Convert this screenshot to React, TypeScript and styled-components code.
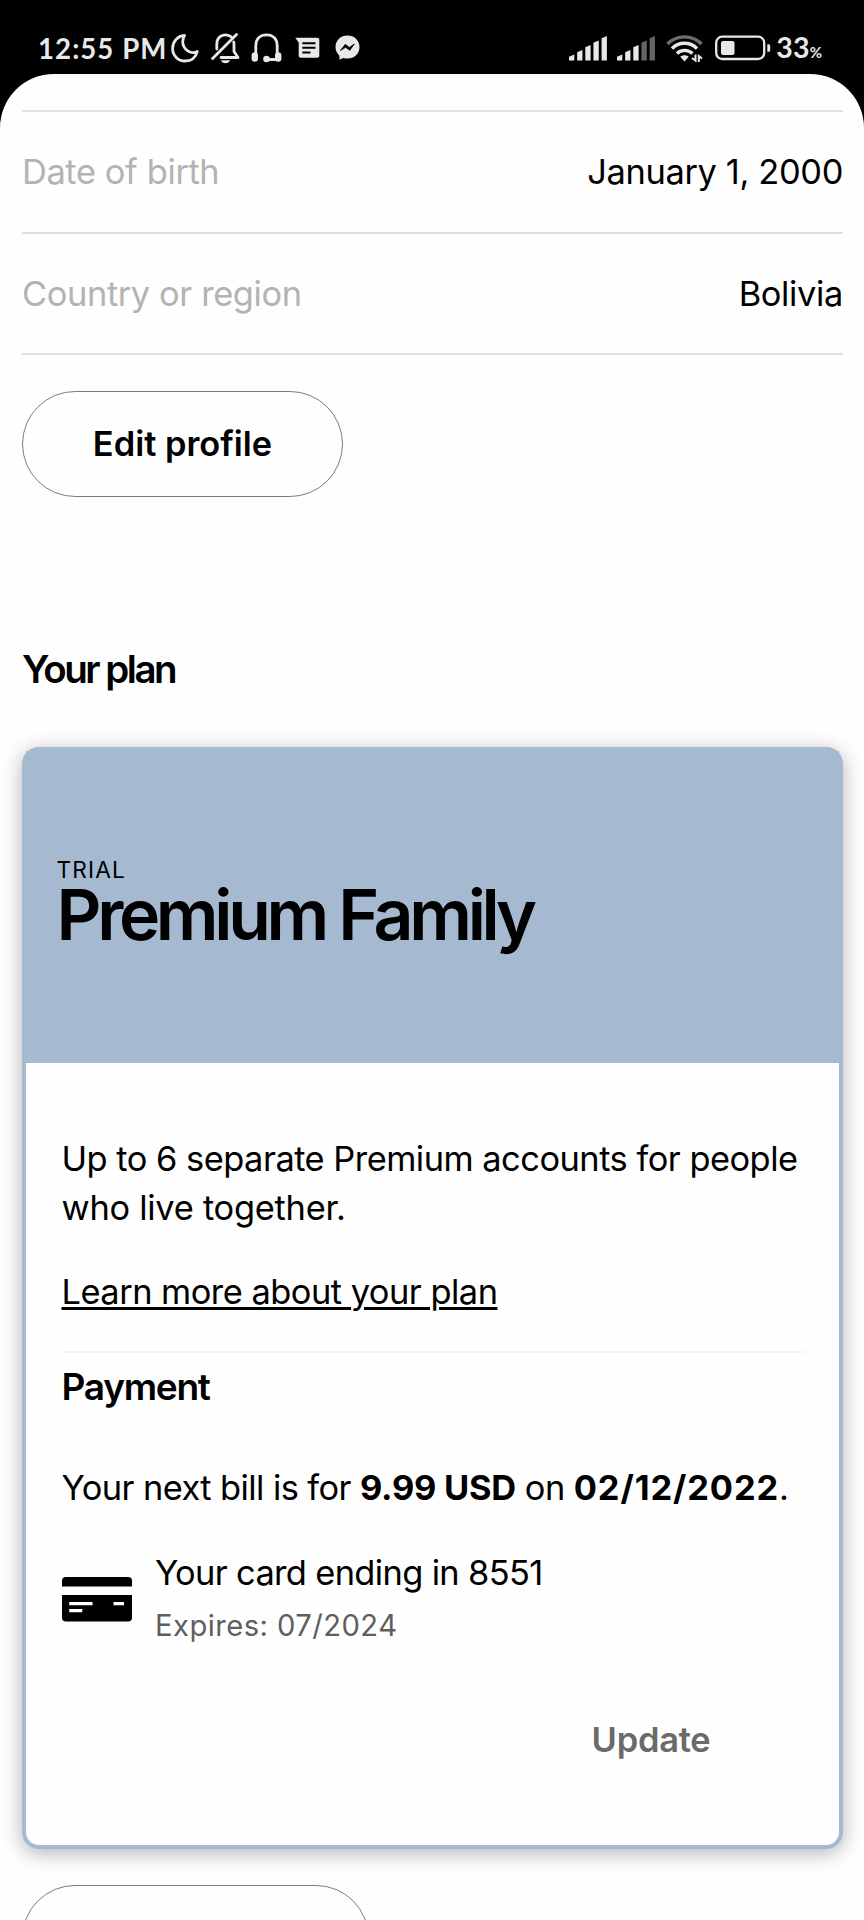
import React from 'react';
import styled, { createGlobalStyle } from 'styled-components';

const GlobalStyle = createGlobalStyle`
  *, *::before, *::after { box-sizing: border-box; }
  body { margin: 0; background: #000; }
  p, h1, h2, h3 { margin: 0; font-weight: 400; }
`;

const Screen = styled.div`
  width: 864px;
  height: 1920px;
  overflow: hidden;
  display: flex;
  flex-direction: column;
  background: #000;
  color: #000;
  font-family: Inter, 'Liberation Sans', sans-serif;
  font-size: 34.4px;
  letter-spacing: -0.35px;
`;

/* ---------- status bar ---------- */

const StatusBar = styled.header`
  flex: none;
  height: 74px;
  padding: 22px 43px 0 38px;
  display: flex;
  justify-content: space-between;
  color: #e8e8e8;
  font-family: Lato, sans-serif;
  font-weight: 700;
`;

const StatusGroup = styled.div`
  display: flex;
  align-items: center;
  height: 52px;
`;

const Clock = styled.span`
  width: 133px;
  padding-top: 2px;
  font-size: 27.6px;
  line-height: 52px;
  letter-spacing: 1.06px;
  white-space: nowrap;
`;

const StatusIcon = styled.svg<{ $gap?: number }>`
  flex: none;
  display: block;
  margin-left: ${({ $gap = 0 }) => $gap}px;
`;

const BatteryLevel = styled.span`
  margin-left: 5px;
  padding-top: 2px;
  font-size: 28.5px;
  line-height: 52px;
  letter-spacing: 0.2px;
`;

const Percent = styled.small`
  font-size: 15px;
  letter-spacing: -1px;
`;

/* ---------- account page ---------- */

const Sheet = styled.main`
  flex: 1;
  min-height: 0;
  padding: 36px 21px 0 22px;
  border-radius: 54px 54px 0 0;
  background: #fefefe;
  overflow: hidden;
`;

const ProfileList = styled.dl`
  margin: 0;
  border-top: 2px solid #e0e0e0;
`;

const ProfileRow = styled.div`
  height: 121.5px;
  display: flex;
  align-items: center;
  justify-content: space-between;
  border-bottom: 2px solid #dedede;
`;

const Term = styled.dt`
  color: #b3b3b3;
  letter-spacing: -0.38px;
`;

const Detail = styled.dd`
  margin: 0;
`;

const PillButton = styled.button<{ $width: number }>`
  display: flex;
  align-items: center;
  justify-content: center;
  width: ${({ $width }) => $width}px;
  height: 106px;
  margin-top: 35.5px;
  padding: 0;
  border: 1.5px solid #7c7c7c;
  border-radius: 53px;
  background: transparent;
  color: #000;
  font: inherit;
  font-weight: 600;
  letter-spacing: 0;
`;

const SectionTitle = styled.h2`
  margin-top: 148.5px;
  font-size: 38.5px;
  font-weight: 600;
  line-height: 48px;
  letter-spacing: -2.48px;
`;

const PlanCard = styled.section`
  height: 1102px;
  margin-top: 54px;
  border: 4px solid #a5bad1;
  border-radius: 17px;
  background: #fefefe;
  box-shadow: 0 4px 20px rgba(0, 0, 0, 0.3);
`;

const PlanHeader = styled.header`
  height: 312px;
  padding: 106.5px 30px 0 30.5px;
  background: #a5bad1;
`;

const PlanTag = styled.p`
  font-size: 22.7px;
  line-height: 24px;
  letter-spacing: 1.13px;
`;

const PlanName = styled.h1`
  font-size: 69.7px;
  font-weight: 600;
  line-height: 65px;
  letter-spacing: -4.32px;
  white-space: nowrap;
`;

const PlanBody = styled.div`
  padding: 72px 35px 0 35.5px;
  line-height: 48.5px;
`;

const Description = styled.p`
  letter-spacing: -0.5px;
  white-space: nowrap;
`;

const SecondLine = styled.span`
  display: block;
  letter-spacing: -0.26px;
`;

const PlanLink = styled.a`
  display: block;
  width: max-content;
  margin-top: 35.5px;
  color: #000;
  letter-spacing: -0.5px;
  text-decoration: underline;
  text-decoration-thickness: 3px;
  text-underline-offset: 3px;
`;

const Divider = styled.hr`
  height: 2px;
  margin: 34.5px 0 0 1px;
  border: 0;
  background: #f3f3f3;
`;

const PaymentTitle = styled.h3`
  margin-top: 11px;
  font-size: 37.1px;
  font-weight: 600;
  line-height: 46px;
  letter-spacing: -1.3px;
`;

const Bill = styled.p`
  margin-top: 54px;
  letter-spacing: -0.57px;
  white-space: nowrap;
`;

const Strong = styled.strong<{ $spacing: number }>`
  font-weight: 650;
  letter-spacing: ${({ $spacing }) => $spacing}px;
`;

const PaymentMethod = styled.div`
  display: flex;
  align-items: center;
  gap: 23.5px;
  margin-top: 37px;
`;

const CardIcon = styled.svg`
  flex: none;
  margin-top: 3px;
`;

const CardNumber = styled.p`
  letter-spacing: -0.64px;
`;

const Expiry = styled.p`
  margin-top: 8.5px;
  color: #5e5e5e;
  font-size: 29.2px;
  line-height: 40px;
  letter-spacing: 0.45px;
`;

const UpdateButton = styled.button`
  display: block;
  margin: 70px 0 0 auto;
  padding: 0 93.5px;
  border: 0;
  background: none;
  color: #6a6a6a;
  font: inherit;
  font-weight: 600;
  line-height: 48px;
  letter-spacing: -0.2px;
`;

/* ---------- icons ---------- */

const MoonIcon = () => (
  <StatusIcon width="28" height="30" viewBox="0 0 28 30" fill="none" stroke="currentColor" strokeWidth="2.8" strokeLinejoin="round">
    <path d="M13.5 2.5C6.5 3 1.6 8.6 1.6 15.5C1.6 22.6 7.2 28 14 28C19.5 28 24.6 25 26.3 18.5C24 19.8 21.5 20 19 19C12.8 16.8 9.5 9.5 13.5 2.5Z" />
  </StatusIcon>
);

const BellOffIcon = () => (
  <StatusIcon $gap={12} width="29" height="32" viewBox="0 0 29 32" fill="none" stroke="currentColor" strokeWidth="2.8" strokeLinecap="round" strokeLinejoin="round">
    <path d="M5.8 17V12C5.8 6.5 9.5 2.8 14.5 2.8C17 2.8 19.2 3.8 20.5 5" />
    <path d="M22.7 10C23 11 23 12 23 13V19.5L27 25.5H10" />
    <path d="M1.6 26.5L25.5 2.5" />
    <path d="M10 28.3H19C18.2 32.2 10.8 32.2 10 28.3Z" fill="currentColor" stroke="none" />
  </StatusIcon>
);

const HeadphonesIcon = () => (
  <StatusIcon $gap={11} width="31" height="30" viewBox="0 0 31 30" fill="none" stroke="currentColor" strokeWidth="2.8" strokeLinecap="round">
    <path d="M4.8 21V13C4.8 6 9 1.8 15.5 1.8C22 1.8 26.2 6 26.2 13V21" />
    <path d="M3.8 22.5V25.5M27.2 22.5V25.5" strokeWidth="6.4" />
    <path d="M15.5 26.5H25" strokeWidth="3.2" />
    <circle cx="15.5" cy="26" r="3.3" fill="currentColor" stroke="none" />
  </StatusIcon>
);

const MessageIcon = () => (
  <StatusIcon $gap={13} width="25" height="22" viewBox="0 0 25 22">
    <path d="M0.3 0.8H22C23.5 0.8 24.3 1.6 24.3 3V18.5C24.3 20 23.5 20.7 22 20.7H6C4.5 20.7 3.7 20 3.7 18.5V5.5Z" fill="currentColor" />
    <path d="M7.3 6.3H20.5M7.3 10.8H20.5M7.3 15.5H15.5" stroke="#000" strokeWidth="1.9" />
  </StatusIcon>
);

const MessengerIcon = () => (
  <StatusIcon $gap={15} width="25" height="26" viewBox="0 0 25 26">
    <path d="M12.5 0.5C5.7 0.5 0.5 5.3 0.5 12C0.5 15.5 2 18.5 4.3 20.6L4.5 24.7L8.3 23C9.6 23.4 11 23.6 12.5 23.6C19.3 23.6 24.5 18.7 24.5 12C24.5 5.3 19.3 0.5 12.5 0.5Z" fill="currentColor" />
    <path d="M5.5 15.5L10.3 9.3L14.3 12.5L19.3 9L14.8 15.3L10.6 12.3Z" fill="#000" stroke="#000" strokeWidth="0.8" strokeLinejoin="round" />
  </StatusIcon>
);

const SIGNAL_BARS = [6, 10.5, 15.5, 20, 24.5];

const SignalIcon = ({ level, gap }: { level: number; gap?: number }) => (
  <StatusIcon $gap={gap} width="38" height="26" viewBox="0 0 38 26">
    {SIGNAL_BARS.map((h, i) => {
      const x = i * 8.15;
      return (
        <path
          key={h}
          d={`M${x} ${25.5 - h + 2.2}L${x + 5.3} ${25.5 - h}V25.5H${x}Z`}
          fill={i < level ? '#e8e8e8' : '#666'}
        />
      );
    })}
  </StatusIcon>
);

const WifiIcon = () => (
  <StatusIcon $gap={11} width="37" height="29" viewBox="0 0 37 29" fill="none" stroke="#e8e8e8" strokeWidth="3.4">
    <path d="M1.5 10C10.5 0.5 26.5 0.5 35.5 10" stroke="#6c6c6c" />
    <path d="M6 14.6C12.5 7.5 24.5 7.5 31 14.6" />
    <path d="M11 19.6C15 15.3 22 15.3 26.5 19.6" />
    <path d="M14.3 22.8C16.5 20.8 20.5 20.8 22.7 22.8L18.5 27.5Z" fill="#e8e8e8" stroke="none" />
    <path d="M29.5 20.5V26.5L26 24M32.8 28V22L36 24.5" strokeWidth="2" />
  </StatusIcon>
);

const BatteryIcon = () => (
  <StatusIcon $gap={12} width="56" height="26" viewBox="0 0 56 26">
    <rect x="1.2" y="1.7" width="48" height="22.3" rx="6" fill="none" stroke="#e8e8e8" strokeWidth="2.3" />
    <rect x="6" y="6" width="13.5" height="14" rx="2" fill="#e8e8e8" />
    <path d="M52.3 9.2H53.5C54.6 9.2 55.2 10 55.2 11V15C55.2 16 54.6 16.8 53.5 16.8H52.3Z" fill="#e8e8e8" />
  </StatusIcon>
);

const CreditCardIcon = () => (
  <CardIcon width="70" height="45" viewBox="0 0 70 45">
    <path d="M4 0H66Q70 0 70 4V9.5H0V4Q0 0 4 0Z" />
    <path d="M0 18H70V40.5Q70 44.5 66 44.5H4Q0 44.5 0 40.5Z" />
    <path d="M7.2 26.6H30.5M7.2 33.6H20.3M51.5 26.6H62" stroke="#fff" strokeWidth="3.2" />
  </CardIcon>
);

/* ---------- page ---------- */

const PROFILE = [
  { label: 'Date of birth', value: 'January 1, 2000' },
  { label: 'Country or region', value: 'Bolivia' },
];

export default function App() {
  return (
    <Screen>
      <GlobalStyle />
      <StatusBar>
        <StatusGroup>
          <Clock>12:55 PM</Clock>
          <MoonIcon />
          <BellOffIcon />
          <HeadphonesIcon />
          <MessageIcon />
          <MessengerIcon />
        </StatusGroup>
        <StatusGroup>
          <SignalIcon level={5} />
          <SignalIcon level={3} gap={10} />
          <WifiIcon />
          <BatteryIcon />
          <BatteryLevel>
            33<Percent>%</Percent>
          </BatteryLevel>
        </StatusGroup>
      </StatusBar>
      <Sheet>
        <ProfileList>
          {PROFILE.map(({ label, value }) => (
            <ProfileRow key={label}>
              <Term>{label}</Term>
              <Detail>{value}</Detail>
            </ProfileRow>
          ))}
        </ProfileList>
        <PillButton $width={321}>Edit profile</PillButton>
        <SectionTitle>Your plan</SectionTitle>
        <PlanCard>
          <PlanHeader>
            <PlanTag>TRIAL</PlanTag>
            <PlanName>Premium Family</PlanName>
          </PlanHeader>
          <PlanBody>
            <Description>
              Up to 6 separate Premium accounts for people{' '}
              <SecondLine>who live together.</SecondLine>
            </Description>
            <PlanLink href="#plan">Learn more about your plan</PlanLink>
            <Divider />
            <PaymentTitle>Payment</PaymentTitle>
            <Bill>
              Your next bill is for <Strong $spacing={-0.25}>9.99 USD</Strong> on{' '}
              <Strong $spacing={0.9}>02/12/2022</Strong>.
            </Bill>
            <PaymentMethod>
              <CreditCardIcon />
              <div>
                <CardNumber>Your card ending in 8551</CardNumber>
                <Expiry>Expires: 07/2024</Expiry>
              </div>
            </PaymentMethod>
            <UpdateButton>Update</UpdateButton>
          </PlanBody>
        </PlanCard>
        <PillButton $width={347} />
      </Sheet>
    </Screen>
  );
}
